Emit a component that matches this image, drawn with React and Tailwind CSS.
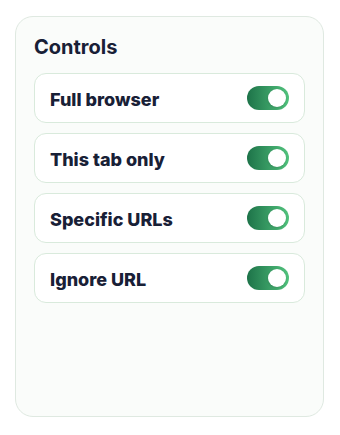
import React from "react";

const controls = ["Full browser", "This tab only", "Specific URLs", "Ignore URL"];

function Toggle() {
  return (
    <div className="flex h-6 w-[42px] items-center justify-end rounded-full bg-gradient-to-r from-[#1d7349] to-[#52c47e] p-[3px]">
      <div className="h-[18px] w-[18px] rounded-full bg-white shadow-sm" />
    </div>
  );
}

export default function App() {
  return (
    <div className="min-h-screen bg-white pl-[15px] pt-4 font-['Inter',sans-serif] text-[#182036]">
      <div className="h-[401px] w-[309px] rounded-[18px] border border-[#dfe9e1] bg-[#fafcfa] px-[18px] pt-4">
        <h2 className="mb-3 text-xl font-bold leading-7">Controls</h2>
        <div className="flex flex-col gap-[10px]">
          {controls.map((label) => (
            <div
              key={label}
              className="flex h-[50px] items-center justify-between rounded-xl border border-[#d9eadc] bg-white px-[15px]"
            >
              <span className="mt-1 text-lg font-extrabold leading-7">{label}</span>
              <Toggle />
            </div>
          ))}
        </div>
      </div>
    </div>
  );
}
